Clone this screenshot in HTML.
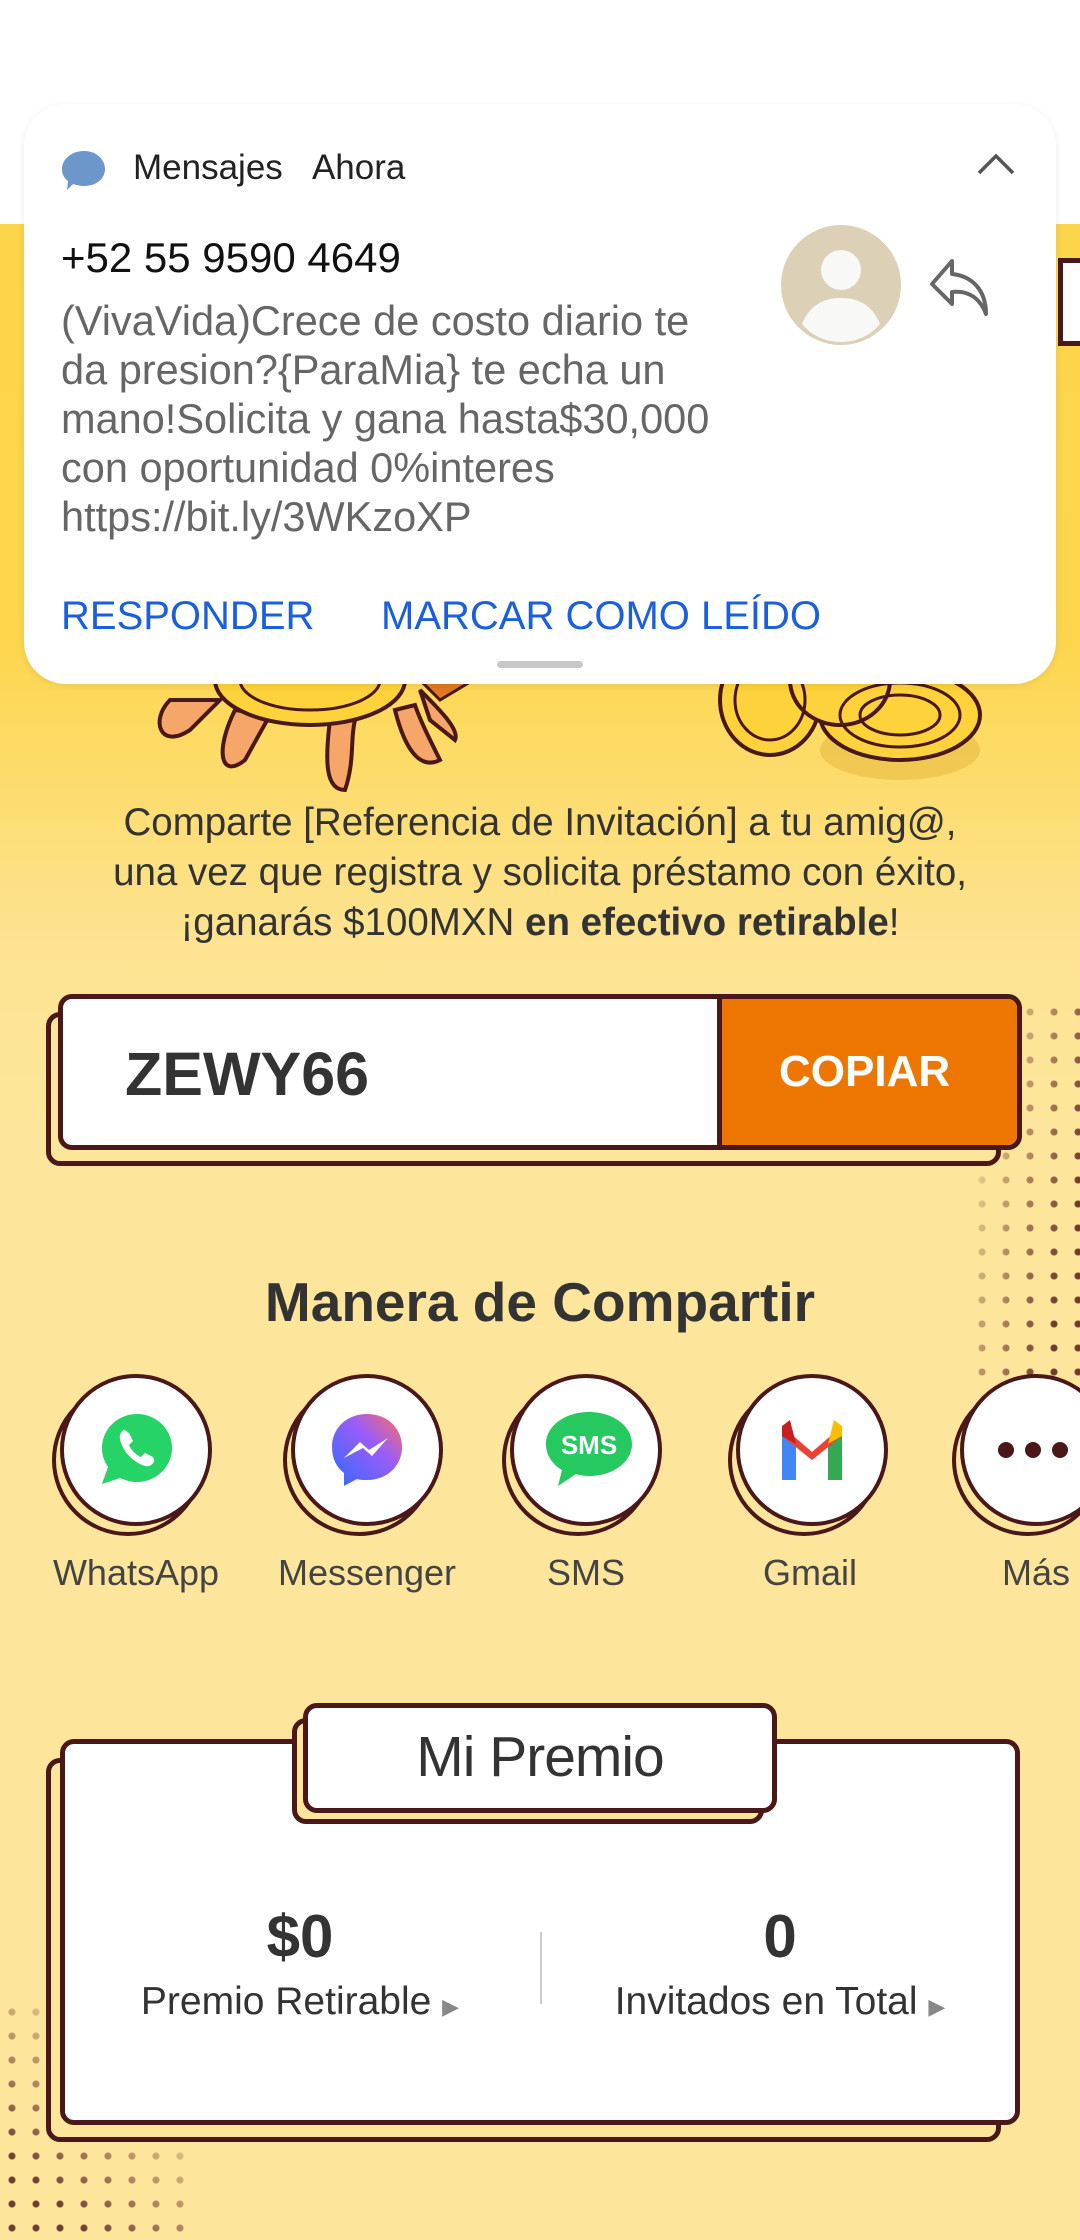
<!DOCTYPE html>
<html><head><meta charset="utf-8">
<style>
*{margin:0;padding:0;box-sizing:border-box}
body{width:1080px;height:2240px;position:relative;overflow:hidden;font-family:"Liberation Sans",sans-serif;background:#fde69b}
.abs{position:absolute}
.bg{left:0;top:224px;width:1080px;height:2016px;background:linear-gradient(180deg,#fdd54a 0px,#fdd64e 420px,#fde392 720px,#fde69b 900px,#fde69b 100%)}
.white{left:0;top:0;width:1080px;height:224px;background:#fff}
.card{left:24px;top:104px;width:1032px;height:580px;background:#fff;border-radius:42px;box-shadow:0 2px 8px rgba(0,0,0,.08)}
.t{position:absolute;white-space:nowrap}
.dots{background-image:radial-gradient(circle,#5a1e1e 3px,transparent 4px);background-size:24px 24px}
.sh{position:absolute;border:5px solid #4a1818;background:#fde69b;border-radius:14px}
.bx{position:absolute;border:5px solid #4a1818;background:#fff;border-radius:14px}
.circ{position:absolute;width:152px;height:152px;border-radius:50%;border:4px solid #4a1818;background:#fff}
.circs{position:absolute;width:152px;height:152px;border-radius:50%;border:4px solid #4a1818;background:#fde69b}
.lbl{position:absolute;top:1552px;font-size:36px;color:#444;width:220px;text-align:center}
</style></head><body>
<div class="abs bg"></div>
<div class="abs white"></div>

<div class="abs" style="left:1058px;top:258px;width:30px;height:88px;border:5px solid #4a1818;border-right:none;background:#fff"></div>

<svg class="abs" style="left:0;top:640px" width="1080" height="170" viewBox="0 0 1080 170">
 <g stroke="#4a1818" stroke-width="4" fill="#f7a66a">
  <path d="M170 60 C150 80 160 110 190 90 L220 60Z"/>
  <path d="M235 70 C215 110 220 140 245 120 L270 75Z"/>
  <path d="M330 80 C325 120 325 150 345 150 C355 120 350 100 355 80Z"/>
  <path d="M395 70 C405 110 420 130 440 120 C430 100 420 80 415 65Z"/>
  <path d="M420 50 C440 70 460 90 455 100 L430 80Z"/>
 </g>
 <ellipse cx="310" cy="40" rx="95" ry="45" fill="#fdd23a" stroke="#4a1818" stroke-width="4"/>
 <ellipse cx="310" cy="40" rx="70" ry="30" fill="none" stroke="#4a1818" stroke-width="3"/>
 <path d="M420 40 L490 30 L440 60Z" fill="#e07a20" stroke="#4a1818" stroke-width="3"/>
 <ellipse cx="900" cy="110" rx="80" ry="30" fill="#e9c048" opacity=".7"/>
 <g stroke="#4a1818" stroke-width="4" fill="#fdd23a">
  <ellipse cx="770" cy="60" rx="50" ry="55"/>
  <ellipse cx="900" cy="75" rx="80" ry="45"/>
  <ellipse cx="840" cy="40" rx="50" ry="45"/>
 </g>
 <g stroke="#4a1818" stroke-width="3" fill="none">
  <ellipse cx="900" cy="75" rx="60" ry="32"/><ellipse cx="900" cy="75" rx="40" ry="20"/>
  <ellipse cx="770" cy="60" rx="35" ry="40"/>
 </g>
</svg>

<div class="abs card">
 <svg class="abs" style="left:37px;top:45px" width="46" height="44" viewBox="0 0 46 44"><path d="M23 2C35 2 44 10 44 20C44 30 35 37 23 37C19 37 15 36 12 35L6 41L7 32C3 29 1 25 1 20C1 10 11 2 23 2Z" fill="#6b97cb"/></svg>
 <div class="t" style="left:109px;top:44px;font-size:35px;color:#222">Mensajes&nbsp;&nbsp;&nbsp;Ahora</div>
 <svg class="abs" style="left:952px;top:48px" width="40" height="24"><path d="M3 21L20 4L37 21" stroke="#555" stroke-width="3.5" fill="none"/></svg>
 <div class="t" style="left:37px;top:130px;font-size:42px;color:#111">+52 55 9590 4649</div>
 <div class="t" style="left:37px;top:192px;font-size:41.5px;line-height:49px;color:#666">(VivaVida)Crece de costo diario te<br>da presion?{ParaMia} te echa un<br>mano!Solicita y gana hasta$30,000<br>con oportunidad 0%interes<br>https://bit.ly/3WKzoXP</div>
 <svg class="abs" style="left:756px;top:120px" width="122" height="122" viewBox="0 0 122 122"><circle cx="61" cy="61" r="60" fill="#dcd0b6"/><circle cx="61" cy="46" r="20" fill="#f8f8f6"/><path d="M22 100C30 80 45 74 61 74C77 74 92 80 100 100C90 112 76 118 61 118C46 118 32 112 22 100Z" fill="#f8f8f6"/></svg>
 <svg class="abs" style="left:904px;top:152px" width="64" height="64" viewBox="0 0 64 64"><path d="M24 5L4 28L24 48L24 36C40 34 52 42 58 58C58 34 44 20 24 18Z" stroke="#666" stroke-width="4" fill="none" stroke-linejoin="round"/></svg>
 <div class="t" style="left:37px;top:490px;font-size:40px;color:#1a5fe0">RESPONDER</div>
 <div class="t" style="left:357px;top:490px;font-size:40px;color:#1a5fe0">MARCAR COMO LEÍDO</div>
 <div class="abs" style="left:473px;top:557px;width:86px;height:7px;border-radius:4px;background:#c8c8c8"></div>
</div>

<div class="t" style="left:0;width:1080px;top:798px;text-align:center;font-size:38.5px;line-height:50px;color:#333">Comparte [Referencia de Invitación] a tu amig@,<br>una vez que registra y solicita préstamo con éxito,<br>¡ganarás $100MXN <b>en efectivo retirable</b>!</div>

<div class="abs dots" style="left:970px;top:1000px;width:110px;height:380px;opacity:.85;-webkit-mask-image:linear-gradient(100deg,transparent 10%,#000 80%);mask-image:linear-gradient(100deg,transparent 10%,#000 80%)"></div>
<div class="abs dots" style="left:0;top:2000px;width:200px;height:240px;opacity:.85;-webkit-mask-image:linear-gradient(45deg,#000 20%,transparent 75%);mask-image:linear-gradient(45deg,#000 20%,transparent 75%)"></div>

<div class="sh" style="left:46px;top:1012px;width:955px;height:154px"></div>
<div class="bx" style="left:58px;top:994px;width:964px;height:156px;overflow:hidden">
 <div class="abs" style="left:654px;top:0;width:306px;height:150px;background:#ec7600;border-left:5px solid #4a1818"></div>
 <div class="t" style="left:62px;top:40px;font-size:61px;font-weight:bold;color:#333">ZEWY66</div>
 <div class="t" style="left:716px;top:48px;font-size:44px;font-weight:bold;color:#fff">COPIAR</div>
</div>

<div class="t" style="left:0;width:1080px;top:1270px;text-align:center;font-size:55px;font-weight:bold;color:#333">Manera de Compartir</div>

<div class="circs" style="left:52px;top:1384px"></div><div class="circ" style="left:60px;top:1374px"></div>
<div class="circs" style="left:283px;top:1384px"></div><div class="circ" style="left:291px;top:1374px"></div>
<div class="circs" style="left:502px;top:1384px"></div><div class="circ" style="left:510px;top:1374px"></div>
<div class="circs" style="left:728px;top:1384px"></div><div class="circ" style="left:736px;top:1374px"></div>
<div class="circs" style="left:952px;top:1384px"></div><div class="circ" style="left:960px;top:1374px"></div>

<svg class="abs" style="left:100px;top:1412px" width="74" height="74" viewBox="0 0 74 74"><path d="M37 2C56 2 72 17 72 36C72 55 56 70 37 70C31 70 25 68 20 66L2 72L8 55C4 49 2 43 2 36C2 17 18 2 37 2Z" fill="#25d366"/><path d="M25 18C22 18 19 22 20 27C22 38 32 50 45 54C50 55 54 52 54 48L53 45L45 41L41 45C36 43 31 38 29 33L33 29L29 21Z" fill="#fff"/></svg>
<svg class="abs" style="left:330px;top:1412px" width="74" height="76" viewBox="0 0 74 76"><defs><linearGradient id="mg" x1="0" y1="1" x2="1" y2="0"><stop offset="0" stop-color="#2f6bff"/><stop offset=".6" stop-color="#9b5cf8"/><stop offset="1" stop-color="#ff6f61"/></linearGradient></defs><path d="M37 2C57 2 72 16 72 35C72 54 57 68 37 68C33 68 30 68 27 67L14 74L14 61C6 55 2 46 2 35C2 16 17 2 37 2Z" fill="url(#mg)"/><path d="M14 46L30 30L39 38L58 26L42 44L33 36Z" fill="#fff"/></svg>
<svg class="abs" style="left:544px;top:1410px" width="90" height="82" viewBox="0 0 90 82"><path d="M45 2C69 2 88 16 88 34C88 52 69 66 45 66C40 66 36 65 32 64L14 76L18 60C8 54 2 45 2 34C2 16 21 2 45 2Z" fill="#25c95f"/><text x="45" y="44" text-anchor="middle" font-family="Liberation Sans" font-weight="bold" font-size="26" fill="#fff">SMS</text></svg>
<svg class="abs" style="left:778px;top:1416px" width="68" height="68" viewBox="0 0 68 68"><path d="M4 10L4 64L18 64L18 28Z" fill="#4285f4"/><path d="M50 28L50 64L64 64L64 10Z" fill="#34a853"/><path d="M4 10L34 36L64 10L64 20L34 44L4 20Z" fill="#ea4335"/><path d="M56 4L64 10L64 20L50 28Z" fill="#fbbc04"/><path d="M4 10L12 4L18 28L4 20Z" fill="#c5221f"/></svg>
<svg class="abs" style="left:996px;top:1440px" width="84" height="20"><circle cx="10" cy="10" r="8" fill="#4a1818"/><circle cx="37" cy="10" r="8" fill="#4a1818"/><circle cx="64" cy="10" r="8" fill="#4a1818"/></svg>

<div class="lbl" style="left:26px">WhatsApp</div>
<div class="lbl" style="left:257px">Messenger</div>
<div class="lbl" style="left:476px">SMS</div>
<div class="lbl" style="left:700px">Gmail</div>
<div class="lbl" style="left:926px">Más</div>

<div class="sh" style="left:46px;top:1758px;width:955px;height:384px"></div>
<div class="bx" style="left:60px;top:1739px;width:960px;height:386px"></div>
<div class="sh" style="left:292px;top:1718px;width:472px;height:106px"></div>
<div class="bx" style="left:303px;top:1703px;width:474px;height:110px"></div>
<div class="t" style="left:303px;width:474px;top:1724px;text-align:center;font-size:57px;color:#333;letter-spacing:-1px">Mi Premio</div>
<div class="t" style="left:60px;width:480px;top:1902px;text-align:center;font-size:60px;font-weight:bold;color:#333">$0</div>
<div class="t" style="left:60px;width:480px;top:1980px;text-align:center;font-size:39px;color:#333">Premio Retirable <span style="font-size:22px;color:#888">▶</span></div>
<div class="abs" style="left:540px;top:1932px;width:2px;height:72px;background:#ccc"></div>
<div class="t" style="left:540px;width:480px;top:1902px;text-align:center;font-size:60px;font-weight:bold;color:#333">0</div>
<div class="t" style="left:540px;width:480px;top:1980px;text-align:center;font-size:39px;color:#333">Invitados en Total <span style="font-size:22px;color:#888">▶</span></div>
</body></html>
